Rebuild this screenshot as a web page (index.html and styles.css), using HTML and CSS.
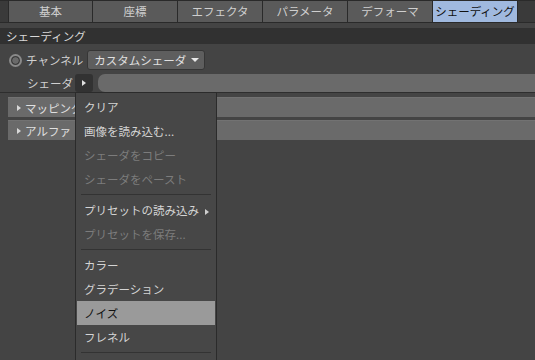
FILE: index.html
```html
<!DOCTYPE html>
<html lang="ja">
<head>
  <meta charset="UTF-8" />
  <title>シェーディング</title>
  <link rel="stylesheet" href="styles.css">
</head>
<body>

  <!-- Tab bar -->
  <div class="tabs">
    <div class="tab">基本</div>
    <div class="tab">座標</div>
    <div class="tab">エフェクタ</div>
    <div class="tab">パラメータ</div>
    <div class="tab">デフォーマ</div>
    <div class="tab active">シェーディング</div>
  </div>

  <div class="panel">
    <div class="section-title">シェーディング</div>

    <div class="row">
      <span class="radio"></span>
      <span class="label">チャンネル</span>
      <div class="dropdown">カスタムシェーダ <span class="caret"></span></div>
    </div>

    <div class="row shader-row">
      <span class="label indent">シェーダ</span>
      <div class="menu-btn"><span class="tri"></span></div>
      <div class="field"></div>
    </div>

    <div class="group"><span class="tri"></span>マッピング</div>
    <div class="group"><span class="tri"></span>アルファ</div>

    <!-- Popup menu opened from the shader button -->
    <div class="popup">
      <div class="item">クリア</div>
      <div class="item">画像を読み込む...</div>
      <div class="item disabled">シェーダをコピー</div>
      <div class="item disabled">シェーダをペースト</div>
      <div class="sep"></div>
      <div class="item">プリセットの読み込み <span class="tri"></span></div>
      <div class="item disabled">プリセットを保存...</div>
      <div class="sep"></div>
      <div class="item">カラー</div>
      <div class="item">グラデーション</div>
      <div class="item hover">ノイズ</div>
      <div class="item">フレネル</div>
      <div class="sep"></div>
    </div>
  </div>

</body>
</html>
```

FILE: styles.css
```css
/* Page */
body {
  margin: 0;
  width: 535px;
  height: 360px;
  overflow: hidden;
  background-color: #444444;
  font-family: "Noto Sans CJK JP", "Noto Sans", sans-serif;
  font-size: 11px;
  color: #d0d0d0;
}

/* Tabs */
.tabs {
  display: flex;
  height: 21px;
  padding-left: 8px;
  background-color: #3a3a3a;
  border-top: 1px solid #2a2a2a;
  border-bottom: 1px solid #2a2a2a;
}

.tab {
  width: 84px;
  border-right: 1px solid #2a2a2a;
  background-color: #5a5a5a;
  color: #cfcfcf;
  text-align: center;
  line-height: 21px;
  font-size: 11.5px;
}

.tab:first-child {
  border-left: 1px solid #2a2a2a;
  width: 83px;
}

.tab.active {
  background-color: #a0b9df;
  color: #111;
}

/* Main panel */
.panel {
  position: relative;
  padding-top: 5px;
  background-color: #444444;
}

.section-title {
  height: 16px;
  line-height: 16px;
  padding-left: 6px;
  background-color: #313131;
  color: #d8d8d8;
  font-size: 11.5px;
  margin-bottom: 6px;
}

.row {
  display: flex;
  align-items: center;
  height: 20px;
  padding-left: 9px;
}

.radio {
  width: 9px;
  height: 9px;
  border-radius: 50%;
  border: 2px solid #8a8a8a;
  background: radial-gradient(circle, #6a6a6a 45%, #3d3d3d 55%);
  margin-right: 4px;
}

.label {
  color: #d0d0d0;
  font-size: 11.5px;
}

.label.indent {
  margin-left: 18px;
  width: 48px;
}

.dropdown {
  display: flex;
  align-items: center;
  justify-content: space-between;
  box-sizing: border-box;
  width: 118px;
  height: 20px;
  margin-left: 4px;
  padding: 0 5px 0 6px;
  background-color: #5e5e5e;
  border: 1px solid #363636;
  border-radius: 3px;
  color: #e0e0e0;
  font-size: 11.5px;
}

.caret {
  width: 0;
  height: 0;
  border-left: 4px solid transparent;
  border-right: 4px solid transparent;
  border-top: 4px solid #e8e8e8;
}

.shader-row {
  margin-top: 3px;
  height: 19px;
  border-bottom: 1px solid #2e2e2e;
}

.menu-btn {
  display: flex;
  align-items: center;
  justify-content: center;
  width: 18px;
  height: 18px;
  background-color: #323232;
  border-radius: 3px;
}

.tri {
  display: inline-block;
  width: 0;
  height: 0;
  border-top: 3px solid transparent;
  border-bottom: 3px solid transparent;
  border-left: 4px solid #e0e0e0;
}

.field {
  flex: 1;
  height: 18px;
  margin-left: 5px;
  background-color: #6a6a6a;
  border-radius: 7px 0 0 7px;
}

/* Collapsible groups */
.group {
  display: flex;
  align-items: center;
  height: 19px;
  margin: 4px 0 0 8px;
  padding-left: 9px;
  background-color: #6a6a6a;
  border-top: 1px solid #727272;
  color: #e0e0e0;
  font-size: 11.5px;
}

.group + .group {
  margin-top: 3px;
}

.group .tri {
  margin-right: 4px;
  border-left-color: #d8d8d8;
}

/* Popup menu */
.popup {
  position: absolute;
  left: 75px;
  top: 69px;
  width: 138px;
  height: 300px;
  padding: 2px 1px;
  background-color: #474747;
  border: 1px solid #2b2b2b;
  border-bottom: none;
}

.item {
  height: 24px;
  line-height: 24px;
  padding-left: 7px;
  color: #d4d4d4;
  font-size: 11.5px;
}

.item .tri {
  margin-left: 3px;
  border-left-color: #cfcfcf;
}

.item.disabled {
  color: #7c7c7c;
}

.item.hover {
  background-color: #9a9a9a;
  color: #111;
}

.sep {
  height: 1px;
  margin: 3px 4px;
  background-color: #333333;
}
```
